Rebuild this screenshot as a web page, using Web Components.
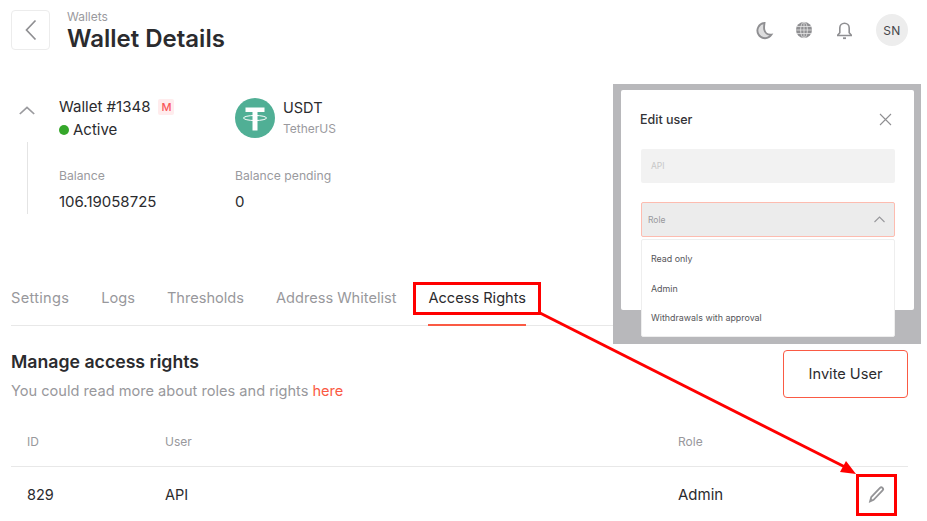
<!DOCTYPE html>
<html lang="en">
<head>
<meta charset="utf-8">
<title>Wallet Details</title>
<style>
  html, body { margin: 0; background: #fff; }
  body { width: 927px; height: 521px; overflow: hidden; position: relative; font-family: Inter, "Liberation Sans", sans-serif; color: #2b2b2e; }
</style>
</head>
<body>
<app-header></app-header>
<wallet-summary></wallet-summary>
<tab-bar></tab-bar>
<access-panel></access-panel>
<edit-user-shot></edit-user-shot>
<guide-marks></guide-marks>

<script>
class AppHeader extends HTMLElement {
    constructor() {
        super();
        this.attachShadow({ mode: 'open' });
        this.shadowRoot.innerHTML = `
            <style>
                :host { display: flex; align-items: flex-start; height: 84px; padding: 10px 19px 0 11px; box-sizing: border-box; }
                .back { width: 39px; height: 40px; box-sizing: border-box; border: 1px solid #ececec; border-radius: 4px; display: flex; align-items: center; justify-content: center; }
                .titles { margin: -1px 0 0 17px; flex: 1; }
                .crumb { font-size: 12px; line-height: 15px; color: #9a9a9e; }
                .title { font-size: 24px; line-height: 26px; font-weight: 600; margin-top: 1.600px; color: #2b2b2e; }
                .tools { display: flex; align-items: center; margin-top: 4px; }
                .tools svg { width: 20px; height: 20px; display: block; margin-right: 20px; }
                .tools svg:nth-child(3) { margin-right: 22px; }
                .avatar { width: 32px; height: 32px; border-radius: 50%; background: #ededed; display: flex; align-items: center; justify-content: center; font-size: 12px; letter-spacing: .4px; color: #47474b; }
            </style>
            <div class="back">
                <svg width="14" height="22" viewBox="0 0 14 22" fill="none" stroke="#8f8f92" stroke-width="1.7"><path d="M11.5 1.5 2.5 11l9 9.5"/></svg>
            </div>
            <div class="titles">
                <div class="crumb">Wallets</div>
                <div class="title">Wallet Details</div>
            </div>
            <div class="tools">
                <svg viewBox="0 0 20 20" fill="#8f8f92" fill-opacity=".3" stroke="#8f8f92" stroke-width="1.9"><path d="M10.500 3a7.600 7.600 0 1 0 7 11.600c-3.800.4-6.700-1.900-7.300-5.300-.4-2.400.1-4.600.3-6.300z"/></svg>
                <svg viewBox="0 0 20 20" fill="none"><circle cx="10" cy="10" r="8" fill="#8f8f92"/><g stroke="#e6e6e6" stroke-width=".8"><ellipse cx="10" cy="10" rx="3.400" ry="8"/><path d="M2 10h16M3 6.500h14M3 13.500h14M10 2v16"/></g></svg>
                <svg viewBox="0 0 20 20" fill="none" stroke="#8f8f92" stroke-width="1.600"><path d="M3.800 15.500v-.5l2-2.300V8a4.700 4.700 0 0 1 9.400 0v4.700l2 2.300v.5z"/><path d="M9 18.200h3" stroke-width="1.800"/></svg>
                <div class="avatar">SN</div>
            </div>
        `;
    }
}

class StatBlock extends HTMLElement {
    constructor() {
        super();
        this.attachShadow({ mode: 'open' });
        this.shadowRoot.innerHTML = `
            <style>
                :host { display: block; }
                .label { font-size: 12.200px; line-height: 16px; color: #9a9a9e; }
                .value { font-size: 15px; line-height: 20px; margin-top: 8px; color: #2b2b2e; }
            </style>
            <div class="label"><slot name="label"></slot></div>
            <div class="value"><slot name="value"></slot></div>
        `;
    }
}

class WalletSummary extends HTMLElement {
    constructor() {
        super();
        this.attachShadow({ mode: 'open' });
        this.shadowRoot.innerHTML = `
            <style>
                :host { display: grid; grid-template-columns: 48px 176px 1fr; grid-template-rows: 72px auto; height: 188px; padding: 12px 0 0 11px; box-sizing: border-box; }
                .rail { grid-row: 1 / 3; display: flex; flex-direction: column; align-items: center; width: 32px; }
                .rail svg { margin-top: 10px; flex: none; }
                .rail i { display: block; width: 1px; height: 72px; background: #e4e4e4; margin-top: 27px; }
                .id { margin-top: 1px; }
                .name { font-size: 15px; line-height: 20px; display: flex; align-items: center; color: #2b2b2e; }
                .badge { margin-left: 8px; width: 16px; height: 16px; border-radius: 2px; background: #ffeced; color: #f9575a; font-size: 11px; font-weight: 500; display: flex; align-items: center; justify-content: center; }
                .status { font-size: 15px; line-height: 20px; margin-top: 3px; display: flex; align-items: center; gap: 4px; }
                .status b { width: 10px; height: 10px; border-radius: 50%; background: #35a72a; }
                .coin { display: flex; gap: 8px; margin-top: 2px; }
                .coin svg { display: block; }
                .sym { font-size: 14.500px; line-height: 20px; }
                .sub { font-size: 12px; line-height: 16px; color: #9a9a9e; margin-top: 3px; }
            </style>
            <div class="rail">
                <svg width="16" height="9" viewBox="0 0 16 9" fill="none" stroke="#9a9a9e" stroke-width="1.700"><path d="M.8 8 8 1.300 15.200 8"/></svg>
                <i></i>
            </div>
            <div class="id">
                <div class="name">Wallet #1348<span class="badge">M</span></div>
                <div class="status"><b></b>Active</div>
            </div>
            <div class="coin">
                <svg width="40" height="40" viewBox="0 0 40 40"><circle cx="20" cy="20" r="20" fill="#50af95"/><path fill="#fff" d="M10.500 9.500h19v4.600h-7v3.300h-5v-3.300h-7z"/><path fill="#fff" d="M17.500 17h5v15.500h-5z"/><ellipse cx="20" cy="20" rx="11.500" ry="2.500" fill="none" stroke="#fff" stroke-width="1"/></svg>
                <div><div class="sym">USDT</div><div class="sub">TetherUS</div></div>
            </div>
            <stat-block style="grid-column:2"><span slot="label">Balance</span><span slot="value">106.19058725</span></stat-block>
            <stat-block style="grid-column:3"><span slot="label">Balance pending</span><span slot="value">0</span></stat-block>
        `;
    }
}

class TabBar extends HTMLElement {
    constructor() {
        super();
        this.attachShadow({ mode: 'open' });
        this.shadowRoot.innerHTML = `
            <style>
                :host { display: flex; gap: 32px; margin: 0 19px 0 11px; height: 54px; box-sizing: border-box; border-bottom: 1px solid #e8e8e8; font-size: 14.600px; color: #98989c; }
                span { display: block; padding-top: 16px; line-height: 20px; height: 54px; box-sizing: border-box; }
                .wide { letter-spacing: .3px; }
                .on { color: #2b2b2e; border-bottom: 2px solid #fa5a44; }
            </style>
            <span class="wide">Settings</span><span>Logs</span><span>Thresholds</span><span>Address Whitelist</span><span class="on">Access Rights</span>
        `;
    }
}

class AccessPanel extends HTMLElement {
    constructor() {
        super();
        this.attachShadow({ mode: 'open' });
        this.shadowRoot.innerHTML = `
            <style>
                :host { display: block; margin: 0 19px 0 11px; }
                .top { display: flex; justify-content: space-between; align-items: flex-start; height: 96px; padding-top: 24px; box-sizing: border-box; }
                h2 { margin: 0; font-size: 17.700px; line-height: 24px; font-weight: 600; color: #2b2b2e; }
                p { margin: 7px 0 0; font-size: 14.600px; line-height: 20px; color: #98989c; }
                a { color: #fa5a44; }
                .invite { width: 125px; height: 48px; box-sizing: border-box; border: 1px solid #fa5a44; border-radius: 4px; display: flex; align-items: center; justify-content: center; font-size: 14.600px; padding-bottom: 1px; color: #2b2b2e; }
                .row { display: grid; grid-template-columns: 138px 513px 1fr 50px; padding-left: 16px; align-items: center; }
                .head { height: 45px; padding-bottom: 6px; font-size: 12px; color: #98989c; border-bottom: 1px solid #e8e8e8; box-sizing: border-box; }
                .body { height: 56px; padding-bottom: 2px; box-sizing: border-box; font-size: 14.500px; color: #2b2b2e; }
                .role { font-size: 15px; }
                svg { display: block; margin-left: 8px; }
            </style>
            <div class="top">
                <div><h2>Manage access rights</h2><p>You could read more about roles and rights <a>here</a></p></div>
                <div class="invite">Invite User</div>
            </div>
            <div class="row head"><span>ID</span><span>User</span><span>Role</span><span></span></div>
            <div class="row body"><span>829</span><span>API</span><span class="role">Admin</span>
                <svg width="20" height="20" viewBox="0 0 20 20" fill="none" stroke="#949497" stroke-width="1.800"><path d="M5.200 13.200 14 3.900a1.800 1.800 0 0 1 2.600 2.500L7.600 15.800l-3.500 1.600z"/><path d="M3.500 18l1-3.500 2 1.600z" fill="#949497" stroke="none"/></svg>
            </div>
        `;
    }
}

class EditUserShot extends HTMLElement {
    constructor() {
        super();
        this.attachShadow({ mode: 'open' });
        this.shadowRoot.innerHTML = `
            <style>
                :host { position: absolute; left: 613px; top: 84px; width: 308px; height: 260px; background: #b8b8bb; display: block; }
                .dialog { position: absolute; left: 8px; top: 6px; width: 293px; height: 220px; background: #fff; border-radius: 2px; padding: 0 19px 0 20px; box-sizing: border-box; }
                .head { display: flex; justify-content: space-between; align-items: center; height: 58px; margin-left: -1px; font-size: 12.500px; font-weight: 500; color: #333336; }
                .head svg { margin-right: 3px; }
                .field { width: 254px; height: 34px; margin-top: 1px; background: #f2f2f2; border-radius: 2px; font-size: 8.500px; color: #c8c8c8; display: flex; align-items: center; padding-left: 10px; box-sizing: border-box; }
                .select { width: 254px; height: 35px; margin-top: 19px; background: #ececec; border: 1px solid #fdbcb0; border-radius: 2px; font-size: 8.500px; color: #98989c; display: flex; align-items: center; justify-content: space-between; padding: 0 9px 0 6px; box-sizing: border-box; }
                .menu { position: absolute; left: 28px; top: 155px; width: 254px; height: 98px; background: #fff; border: 1px solid #eee; border-radius: 2px; box-sizing: border-box; padding-top: 4px; font-size: 8.900px; color: #56565a; }
                .menu div { height: 29.500px; line-height: 29.500px; padding-left: 9px; }
            </style>
            <div class="dialog">
                <div class="head"><span>Edit user</span>
                    <svg width="13" height="13" viewBox="0 0 13 13" stroke="#8f8f92" stroke-width="1.100"><path d="M1 1l11 11M12 1 1 12"/></svg>
                </div>
                <div class="field">API</div>
                <div class="select"><span>Role</span>
                    <svg width="11" height="7" viewBox="0 0 11 7" fill="none" stroke="#98989c" stroke-width="1.100"><path d="M.5 6 5.500 1l5 5"/></svg>
                </div>
            </div>
            <div class="menu"><div>Read only</div><div>Admin</div><div>Withdrawals with approval</div></div>
        `;
    }
}

// red annotations drawn on top of the screenshot
class GuideMarks extends HTMLElement {
    constructor() {
        super();
        this.attachShadow({ mode: 'open' });
        this.shadowRoot.innerHTML = `
            <style>
                :host { position: absolute; left: 0; top: 0; width: 927px; height: 521px; display: block; pointer-events: none; }
            </style>
            <svg width="927" height="521" viewBox="0 0 927 521" fill="none" stroke="#f00" stroke-width="3">
                <rect x="414.500" y="283.500" width="125" height="30"/>
                <rect x="857.500" y="475.500" width="38" height="39"/>
                <path d="M540 313 844 466.500"/>
                <path d="M856 474 840 472 846 461z" fill="#f00" stroke="none"/>
            </svg>
        `;
    }
}

customElements.define('app-header', AppHeader);
customElements.define('stat-block', StatBlock);
customElements.define('wallet-summary', WalletSummary);
customElements.define('tab-bar', TabBar);
customElements.define('access-panel', AccessPanel);
customElements.define('edit-user-shot', EditUserShot);
customElements.define('guide-marks', GuideMarks);
</script>
</body>
</html>
